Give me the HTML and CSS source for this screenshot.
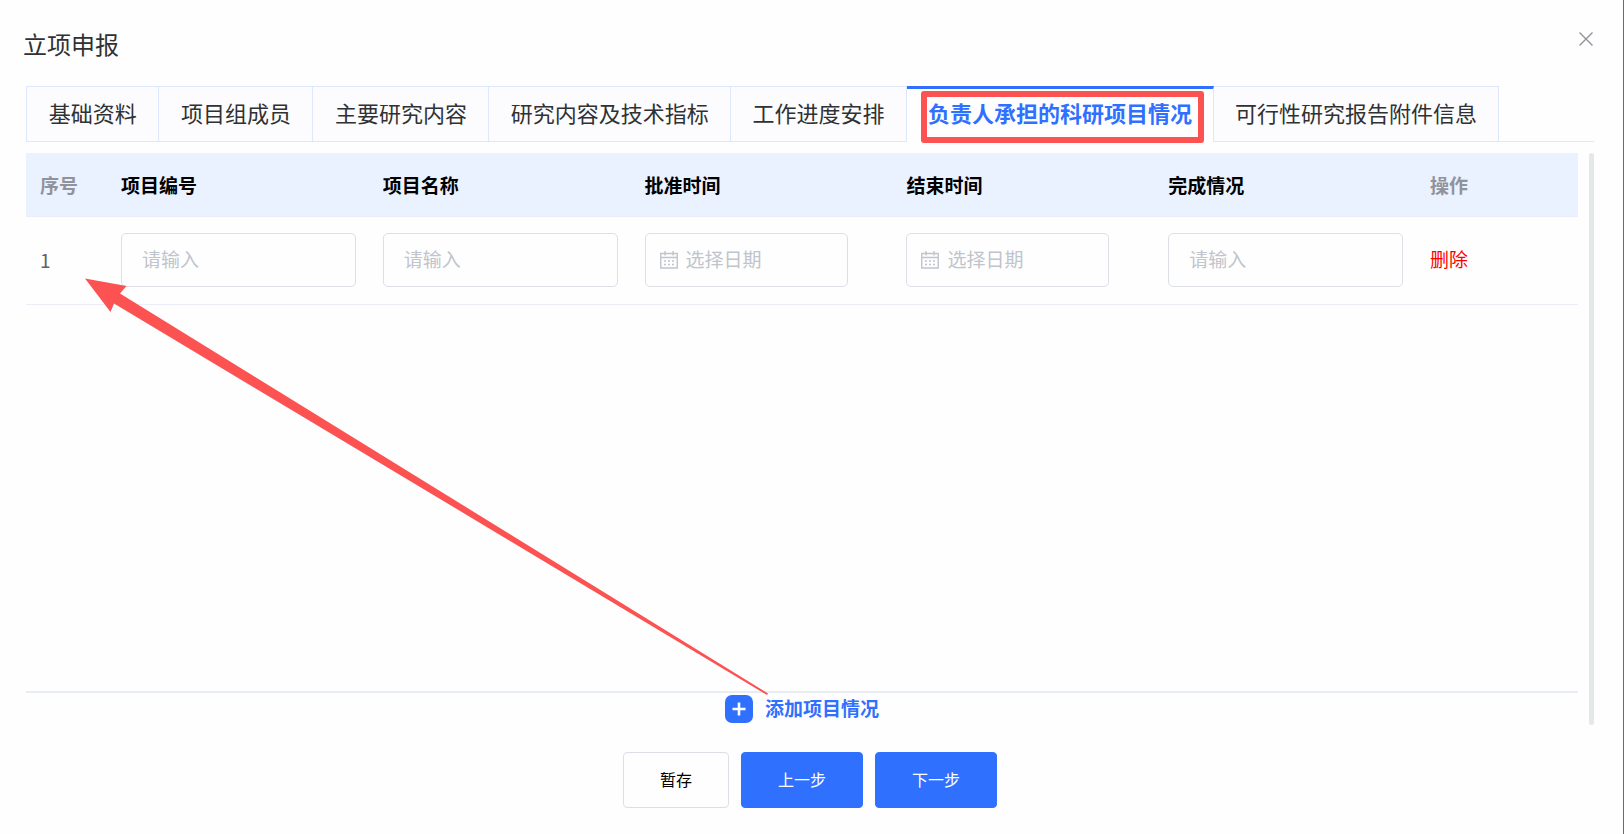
FILE: index.html
```html
<!DOCTYPE html>
<html lang="zh-CN">
  <head>
    <meta charset="UTF-8" />
    <meta name="viewport" content="width=device-width, initial-scale=1.0" />
    <title>立项申报</title>
    <link rel="stylesheet" href="styles.css">
  </head>
  <body>
    <div class="dialog">
      <div class="dialog-header">
        <h1>立项申报</h1>
        <button class="close-btn" type="button" aria-label="关闭">
          <svg width="16" height="16" viewBox="0 0 16 16"><path d="M1.5 1.5L14.5 14.5M14.5 1.5L1.5 14.5" /></svg>
        </button>
      </div>

      <div class="tabs" role="tablist">
        <button class="tab" type="button" role="tab">基础资料</button>
        <button class="tab" type="button" role="tab">项目组成员</button>
        <button class="tab" type="button" role="tab">主要研究内容</button>
        <button class="tab" type="button" role="tab">研究内容及技术指标</button>
        <button class="tab" type="button" role="tab">工作进度安排</button>
        <button class="tab active" type="button" role="tab" aria-selected="true">负责人承担的科研项目情况<span class="mark-box"></span></button>
        <button class="tab" type="button" role="tab">可行性研究报告附件信息</button>
        <div class="tabs-rest"></div>
      </div>

      <div class="content">
        <div class="panel">
          <div class="table-wrap">
            <table>
              <thead>
                <tr>
                  <th class="col-index">序号</th>
                  <th class="required">项目编号</th>
                  <th class="required">项目名称</th>
                  <th class="required">批准时间</th>
                  <th class="required">结束时间</th>
                  <th class="required">完成情况</th>
                  <th class="col-action">操作</th>
                </tr>
              </thead>
              <tbody>
                <tr>
                  <td>1</td>
                  <td><input class="input" type="text" placeholder="请输入" aria-label="项目编号" /></td>
                  <td><input class="input" type="text" placeholder="请输入" aria-label="项目名称" /></td>
                  <td>
                    <div class="date-box">
                      <svg class="date-icon" width="18" height="18" viewBox="0 0 18 18"><path d="M.75 2.5H17.25V17H.75ZM.75 6.5H17.25M5 0V4.5M13 0V4.5M4 10H6M8 10H10M12 10H14M4 13.5H6M8 13.5H10M12 13.5H14" /></svg>
                      <input class="input" type="text" placeholder="选择日期" aria-label="批准时间" />
                    </div>
                  </td>
                  <td>
                    <div class="date-box">
                      <svg class="date-icon" width="18" height="18" viewBox="0 0 18 18"><path d="M.75 2.5H17.25V17H.75ZM.75 6.5H17.25M5 0V4.5M13 0V4.5M4 10H6M8 10H10M12 10H14M4 13.5H6M8 13.5H10M12 13.5H14" /></svg>
                      <input class="input" type="text" placeholder="选择日期" aria-label="结束时间" />
                    </div>
                  </td>
                  <td><input class="input" type="text" placeholder="请输入" aria-label="完成情况" /></td>
                  <td><button class="delete-btn" type="button">删除</button></td>
                </tr>
              </tbody>
            </table>
          </div>
          <button class="add-btn" type="button">
            <svg width="28" height="28" viewBox="0 0 28 28"><rect width="28" height="28" rx="7" fill="#2f70ff" /><path d="M14 7.5V20.5M7.5 14H20.5" stroke="#fff" stroke-width="2.6" /></svg>
            <span>添加项目情况</span>
          </button>
        </div>
        <div class="scroll-bar"></div>
      </div>

      <div class="footer">
        <button class="btn" type="button">暂存</button>
        <button class="btn btn-primary" type="button">上一步</button>
        <button class="btn btn-primary" type="button">下一步</button>
      </div>

      <!-- arrow from the add button to the new row -->
      <svg class="mark-arrow" width="684" height="418" viewBox="0 0 684 418">
        <path d="M0 .5L41.5 8L35 15.5L683 415.5L682 417L29 25.5L25.5 34Z" fill="#fc5252" />
      </svg>
    </div>
  </body>
</html>
```

FILE: styles.css
```css
* {
  box-sizing: border-box;
}

body {
  margin: 0;
  background: #fefefe;
  font-family: "Noto Sans CJK SC", "Microsoft YaHei", sans-serif;
  font-size: 19px;
  color: #606266;
}

button,
input {
  font-family: inherit;
  margin: 0;
}

button {
  cursor: pointer;
}

.dialog {
  position: relative;
  display: flex;
  flex-direction: column;
  min-height: 100vh;
  padding: 0 29px 26px 26px;
  border-right: 1px solid #6a6a6a;
}

/* header */
.dialog-header {
  display: flex;
  justify-content: space-between;
  align-items: center;
  height: 86px;
}

.dialog-header h1 {
  margin: 2px 0 0 -3px;
  font-size: 24px;
  font-weight: 400;
  line-height: 36px;
  color: #303133;
}

.close-btn {
  display: flex;
  margin-bottom: 8px;
  padding: 0;
  border: none;
  background: none;
}

.close-btn path {
  stroke: #909399;
  stroke-width: 1.4;
}

/* tabs */
.tabs {
  display: flex;
  height: 56px;
  padding-right: 95px;
  position: relative;
}

.tab {
  display: flex;
  align-items: center;
  justify-content: center;
  min-width: 0;
  padding: 0 22px 4px;
  border: 1px solid #dde8fd;
  border-left: none;
  background: #fcfcfe;
  color: #303133;
  font-size: 22px;
  line-height: 32px;
  white-space: nowrap;
}

.tab:first-child {
  border-left: 1px solid #dde8fd;
}

.tab.active {
  position: relative;
  border-top: 3px solid #2f70ff;
  border-bottom: none;
  padding-bottom: 7px;
  background: #fefefe;
  color: #2f70ff;
  font-weight: 700;
}

.tabs-rest {
  position: absolute;
  right: 0;
  bottom: 0;
  width: 95px;
  border-bottom: 1px solid #dde8fd;
}

.mark-box {
  position: absolute;
  top: 2px;
  left: 14px;
  right: 9px;
  bottom: -1px;
  border: 6px solid #fc5252;
  border-radius: 3px;
}

/* content */
.content {
  display: flex;
  flex: 1;
  gap: 11px;
  margin-top: 11px;
}

.panel {
  display: flex;
  flex: 1;
  flex-direction: column;
}

.scroll-bar {
  width: 5px;
  border-radius: 3px;
  background: #e4e8e9;
}

.table-wrap {
  flex: 1;
  border-bottom: 2px solid #e8ecf7;
}

table {
  width: 100%;
  table-layout: fixed;
  border-collapse: separate;
  border-spacing: 0;
}

th,
td {
  padding: 0 13px 0 14px;
  border-bottom: 1px solid #ebeef9;
  text-align: left;
}

th {
  height: 64px;
  background: #eaf1ff;
  color: #909399;
  font-weight: 700;
}

th.required {
  color: #000;
}

td {
  height: 88px;
  padding-bottom: 2px;
}

.col-index {
  width: 81px;
}

.col-action {
  width: 162px;
}

.input {
  display: block;
  width: 100%;
  height: 54px;
  padding: 0 20px 3px;
  border: 1px solid #dcdfe6;
  border-radius: 5px;
  background: #fefefe;
  color: #606266;
  font-size: 19px;
}

.input::placeholder {
  color: #c0c4cc;
  opacity: 1;
}

.date-box {
  position: relative;
  max-width: 203px;
}

.date-box .input {
  padding-left: 40px;
  padding-right: 10px;
}

.date-icon {
  position: absolute;
  top: 18px;
  left: 15px;
  fill: none;
  stroke: #c0c4cc;
  stroke-width: 1.4;
}

.delete-btn {
  padding: 0 0 3px;
  border: none;
  background: none;
  color: #ff0000;
  font-size: 19px;
}

.add-btn {
  display: flex;
  align-items: center;
  align-self: center;
  gap: 12px;
  height: 32px;
  padding: 0;
  border: none;
  background: none;
  color: #2f70ff;
  font-size: 19px;
  font-weight: 700;
}

.add-btn span {
  padding-bottom: 3px;
}

/* footer */
.footer {
  display: flex;
  justify-content: center;
  gap: 12px;
  margin-top: 27px;
}

.btn {
  height: 56px;
  padding: 0 36px 3px;
  border: 1px solid #dcdfe6;
  border-radius: 4px;
  background: #fefefe;
  color: #000;
  font-size: 16px;
}

.btn-primary {
  border-color: #2f70ff;
  background: #2f70ff;
  color: #fff;
}

.mark-arrow {
  position: absolute;
  top: 278px;
  left: 85px;
  pointer-events: none;
}
```
